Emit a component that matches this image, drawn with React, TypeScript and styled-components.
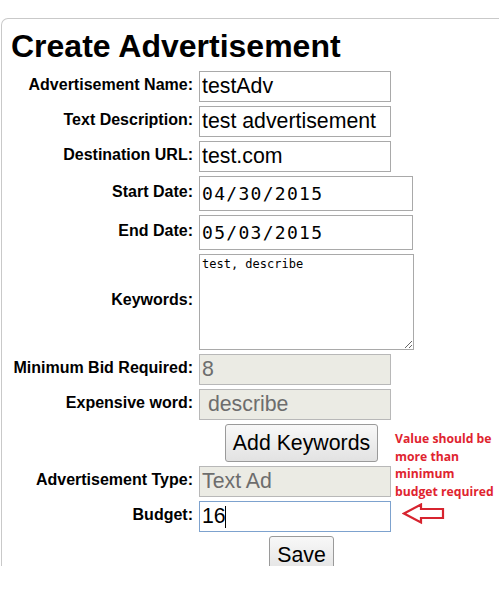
import styled, { createGlobalStyle } from "styled-components"

const GlobalStyle = createGlobalStyle`
  html, body {
    margin: 0;
    padding: 0;
    background: #ffffff;
    overflow: hidden;
  }
  body {
    font-family: "Liberation Sans", Arial, sans-serif;
    color: #000000;
  }
`

type FieldProps = {
  label: string,
  children: React.ReactNode,
}

function Field({ label, children }: FieldProps) {
  return (
    <>
      <Label>{label}</Label>
      <Cell>{children}</Cell>
    </>
  )
}

export default function App() {
  return (
    <>
      <GlobalStyle />
      <Panel>
        <Title>Create Advertisement</Title>
        <FormGrid>
          <Field label="Advertisement Name:">
            <TextInput readOnly value="testAdv" />
          </Field>
          <Field label="Text Description:">
            <TextInput readOnly value="test advertisement" />
          </Field>
          <Field label="Destination URL:">
            <TextInput readOnly value="test.com" />
          </Field>
          <Field label="Start Date:">
            <DateInput readOnly value="04/30/2015" />
          </Field>
          <Field label="End Date:">
            <DateInput readOnly value="05/03/2015" />
          </Field>
          <Field label="Keywords:">
            <KeywordsArea readOnly value="test, describe" />
          </Field>
          <Field label="Minimum Bid Required:">
            <TextInput disabled value="8" />
          </Field>
          <Field label="Expensive word:">
            <TextInput disabled value=" describe" />
          </Field>
          <Cell />
          <ButtonCell>
            <Button type="button">Add Keywords</Button>
          </ButtonCell>
          <Field label="Advertisement Type:">
            <TextInput disabled value="Text Ad" />
          </Field>
          <Field label="Budget:">
            <BudgetWrap>
              <TextInput readOnly value="16" $focused />
              <Caret />
              <Callout>
                <Note>
                  Value should be
                  <br />
                  more than
                  <br />
                  minimum
                  <br />
                  budget required
                </Note>
                <svg width="44" height="22" viewBox="0 0 44 22" aria-hidden="true">
                  <path
                    d="M2 10.5 L19 1.5 L19 6 L41 6 L41 15 L19 15 L19 19.5 Z"
                    fill="#ffffff"
                    stroke="#d7242f"
                    strokeWidth="2.2"
                    strokeLinejoin="miter"
                  />
                </svg>
              </Callout>
            </BudgetWrap>
          </Field>
          <Cell />
          <ButtonCell>
            <Button type="button">Save</Button>
          </ButtonCell>
        </FormGrid>
      </Panel>
    </>
  )
}

const Panel = styled.div`
  box-sizing: border-box;
  height: 548px;
  margin: 18px -12px 0 1px;
  padding: 9px 0 0 9px;
  border: 1px solid #c9c9c9;
  border-bottom: none;
  border-top-left-radius: 7px;
  overflow: hidden;
`

const Title = styled.h1`
  margin: 0 0 6px;
  font-family: "Liberation Sans", Arial, sans-serif;
  font-size: 32px;
  line-height: 37px;
  font-weight: bold;
  color: #000000;
`

const FormGrid = styled.div`
  display: grid;
  grid-template-columns: 182px 215px;
  column-gap: 6px;
  row-gap: 4px;
  align-items: center;
`

const Label = styled.div`
  text-align: right;
  font-size: 16px;
  font-weight: bold;
  line-height: 18px;
  padding-bottom: 4px;
  white-space: nowrap;
`

const Cell = styled.div`
  display: flex;
  align-items: center;
`

const ButtonCell = styled.div`
  width: 205px;
  display: flex;
  justify-content: center;
`

const TextInput = styled.input<{ $focused?: boolean }>`
  box-sizing: border-box;
  width: 192px;
  height: 31px;
  margin: 0;
  padding: 0 2px;
  border: 1px solid ${({ $focused }) => ($focused ? "#7da2ce" : "#a9a9a9")};
  border-radius: 0;
  outline: none;
  background: #ffffff;
  font-family: "Liberation Sans", Arial, sans-serif;
  font-size: 21.3px;
  color: #000000;
  white-space: pre;

  &:disabled {
    background: #ebebe4;
    border-color: #b8b8b8;
    color: #6d6d6d;
    -webkit-text-fill-color: #6d6d6d;
    opacity: 1;
  }
`

const DateInput = styled.input`
  box-sizing: border-box;
  width: 214px;
  height: 35px;
  margin: 0;
  padding: 0 2px;
  border: 1px solid #a9a9a9;
  border-radius: 0;
  outline: none;
  font-family: "DejaVu Sans Mono", "Liberation Mono", monospace;
  font-size: 18px;
  letter-spacing: 1.3px;
  color: #000000;
`

const KeywordsArea = styled.textarea`
  box-sizing: border-box;
  width: 215px;
  height: 96px;
  margin: 0;
  padding: 2px 2px;
  border: 1px solid #a9a9a9;
  border-radius: 0;
  outline: none;
  resize: both;
  font-family: "DejaVu Sans Mono", "Liberation Mono", monospace;
  font-size: 12px;
  line-height: 15px;
  color: #000000;
`

const Button = styled.button`
  box-sizing: border-box;
  height: 38px;
  margin: 0;
  padding: 0 7px;
  border: 1px solid #9a9a9a;
  border-radius: 3px;
  background: linear-gradient(#f8f8f8, #e2e2e2);
  font-family: "Liberation Sans", Arial, sans-serif;
  font-size: 21.3px;
  color: #000000;
  cursor: pointer;
`

const BudgetWrap = styled.div`
  position: relative;
  display: flex;
`

const Caret = styled.span`
  position: absolute;
  left: 26px;
  top: 5px;
  width: 1px;
  height: 22px;
  background: #000000;
`

const Callout = styled.div`
  position: absolute;
  left: 196px;
  top: -71px;
  display: flex;
  flex-direction: column;
  gap: 2px;

  svg {
    display: block;
    margin-left: 7px;
  }
`

const Note = styled.div`
  font-family: "Open Sans", "Liberation Sans", Arial, sans-serif;
  font-size: 12.2px;
  font-weight: bold;
  line-height: 17.7px;
  color: #e0242f;
  white-space: nowrap;
`
